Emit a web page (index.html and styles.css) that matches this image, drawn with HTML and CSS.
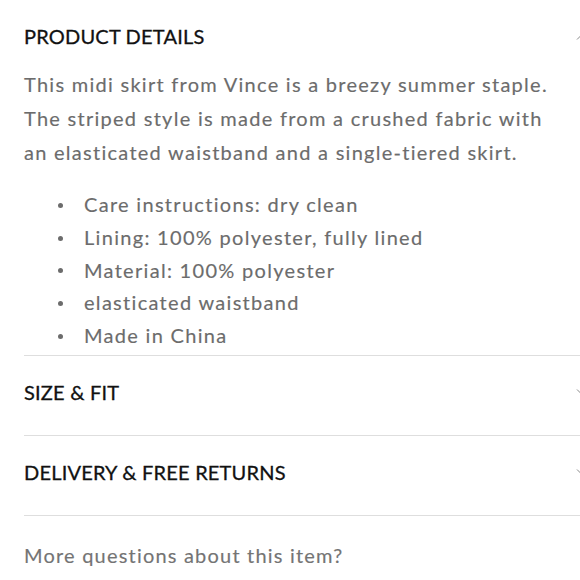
FILE: index.html
```html
<!DOCTYPE html>
<html lang="en">
<head>
<meta charset="utf-8">
<title>Product details</title>
<link rel="stylesheet" href="styles.css">
</head>
<body>
<main class="panel">
  <section class="acc acc-open">
    <div class="acc-head">
      <h2 class="acc-title">PRODUCT DETAILS</h2>
      <svg class="chev" width="12" height="7" viewBox="0 0 12 7"><path d="M1 6.5L6 1.5L11 6.5" fill="none" stroke="#8a8a8a" stroke-width="1"/></svg>
    </div>
    <div class="acc-body">
      <p class="desc">This midi skirt from Vince is a breezy summer staple. The striped style is made from a crushed fabric with an elasticated waistband and a single-tiered skirt.</p>
      <ul class="facts">
        <li>Care instructions: dry clean</li>
        <li>Lining: 100% polyester, fully lined</li>
        <li>Material: 100% polyester</li>
        <li>elasticated waistband</li>
        <li>Made in China</li>
      </ul>
    </div>
  </section>
  <section class="acc">
    <div class="acc-head">
      <h2 class="acc-title">SIZE &amp; FIT</h2>
      <svg class="chev" width="12" height="7" viewBox="0 0 12 7"><path d="M1 0.5L6 5.5L11 0.5" fill="none" stroke="#8a8a8a" stroke-width="1"/></svg>
    </div>
  </section>
  <section class="acc">
    <div class="acc-head">
      <h2 class="acc-title">DELIVERY &amp; FREE RETURNS</h2>
      <svg class="chev" width="12" height="7" viewBox="0 0 12 7"><path d="M1 0.5L6 5.5L11 0.5" fill="none" stroke="#8a8a8a" stroke-width="1"/></svg>
    </div>
  </section>
  <p class="more">More questions about this item?</p>
</main>
</body>
</html>
```
FILE: styles.css
```css
html, body {
  margin: 0;
  padding: 0;
  overflow: hidden;
  background: #ffffff;
}

body {
  font-family: Lato, "Noto Sans", sans-serif;
  font-size: 20px;
  color: #6c6c6c;
}

.panel {
  width: 564px;
  margin-left: 24px;
}

.acc {
  border-bottom: 1px solid #dedede;
  padding: 24px 0 31px;
}

.acc-open {
  padding: 24px 0 0;
}

.acc-head {
  display: flex;
  justify-content: space-between;
  align-items: center;
  height: 24px;
}

.acc-title {
  margin: 0;
  font-size: 20px;
  line-height: 24px;
  font-weight: 400;
  color: #111111;
  letter-spacing: 0.2px;
  -webkit-text-stroke: 0.3px #111111;
}

.chev {
  display: block;
  flex: none;
}

.desc {
  margin: 19px 0 0;
  line-height: 34px;
  letter-spacing: 1.27px;
  width: 540px;
  -webkit-text-stroke: 0.15px #6c6c6c;
}

.facts {
  list-style: none;
  margin: 19px 0 3.25px;
  padding: 0;
}

.facts li {
  display: flex;
  align-items: center;
  line-height: 32.75px;
  letter-spacing: 1.3px;
  -webkit-text-stroke: 0.15px #6c6c6c;
}

.facts li::before {
  content: "";
  flex: none;
  width: 5px;
  height: 5px;
  border-radius: 50%;
  background: #6c6c6c;
  margin: 2px 21px 0 34px;
}

.more {
  margin: 27px 0 0;
  line-height: 24px;
  letter-spacing: 1.2px;
  color: #747474;
  -webkit-text-stroke: 0.15px #747474;
}
```
